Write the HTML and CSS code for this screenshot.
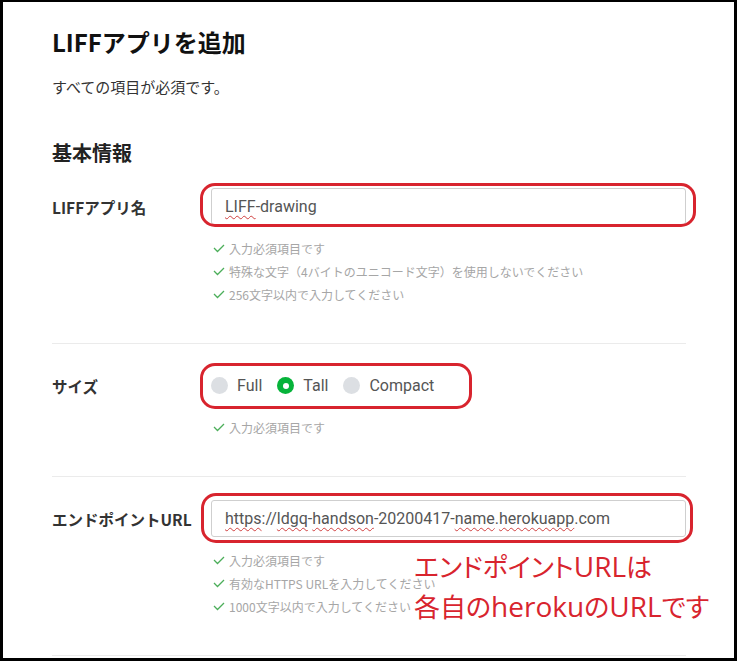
FILE: index.html
```html
<!DOCTYPE html>
<html lang="ja">
<head>
<meta charset="utf-8">
<title>LIFFアプリを追加</title>
<link rel="stylesheet" href="styles.css">
</head>
<body>
<div class="frame">
  <div class="content">
    <h1 class="title">LIFFアプリを追加</h1>
    <p class="lead">すべての項目が必須です。</p>
    <h2 class="heading">基本情報</h2>

    <div class="section">
      <div class="label">LIFFアプリ名</div>
      <div class="field">
        <div class="control">
          <div class="text-input"><span class="typo">LIFF</span>-drawing</div>
          <span class="mark mark-name"></span>
        </div>
        <ul class="hints">
          <li><svg class="check" viewBox="0 0 12 9"><polyline points="1,4 4.5,7.5 11,1"/></svg>入力必須項目です</li>
          <li><svg class="check" viewBox="0 0 12 9"><polyline points="1,4 4.5,7.5 11,1"/></svg>特殊な文字（4バイトのユニコード文字）を使用しないでください</li>
          <li><svg class="check" viewBox="0 0 12 9"><polyline points="1,4 4.5,7.5 11,1"/></svg>256文字以内で入力してください</li>
        </ul>
      </div>
    </div>

    <div class="section">
      <div class="label">サイズ</div>
      <div class="field">
        <div class="control radios">
          <span class="radio"><span class="dot"></span>Full</span>
          <span class="radio"><span class="dot on"></span>Tall</span>
          <span class="radio"><span class="dot"></span>Compact</span>
          <span class="mark mark-size"></span>
        </div>
        <ul class="hints">
          <li><svg class="check" viewBox="0 0 12 9"><polyline points="1,4 4.5,7.5 11,1"/></svg>入力必須項目です</li>
        </ul>
      </div>
    </div>

    <div class="section">
      <div class="label">エンドポイントURL</div>
      <div class="field">
        <div class="control">
          <div class="text-input"><span class="typo">https</span>://<span class="typo">ldgq</span>-<span class="typo">handson</span>-20200417-<span class="typo">name</span>.<span class="typo">herokuapp</span>.com</div>
          <span class="mark mark-url"></span>
        </div>
        <ul class="hints">
          <li><svg class="check" viewBox="0 0 12 9"><polyline points="1,4 4.5,7.5 11,1"/></svg>入力必須項目です</li>
          <li><svg class="check" viewBox="0 0 12 9"><polyline points="1,4 4.5,7.5 11,1"/></svg>有効なHTTPS URLを入力してください</li>
          <li><svg class="check" viewBox="0 0 12 9"><polyline points="1,4 4.5,7.5 11,1"/></svg>1000文字以内で入力してください</li>
        </ul>
        <p class="note">エンドポイント<span class="latin">URL</span>は<br>各自の<span class="latin">heroku</span>の<span class="latin">URL</span>です</p>
      </div>
    </div>
  </div>
</div>
</body>
</html>
```

FILE: styles.css
```css
* { box-sizing: border-box; }

html, body {
  margin: 0;
  padding: 0;
  background: #ffffff;
}

body {
  font-family: "Noto Sans CJK JP", "Noto Sans", sans-serif;
  color: #222;
}

.frame {
  position: relative;
  width: 737px;
  height: 661px;
  overflow: hidden;
  background: #ffffff;
  border-left: 3px solid #000;
  border-top: 2px solid #000;
  border-right: 3px solid #000;
  border-bottom: 3px solid #000;
}

.content {
  width: 683px;
  padding: 23px 0 0 49px;
}

.title {
  margin: 0;
  font-size: 24px;
  line-height: 34px;
  font-weight: 700;
  color: #111;
}

.lead {
  margin: 18px 0 0;
  font-size: 15px;
  line-height: 20px;
  color: #333;
}

.heading {
  margin: 44px 0 0;
  font-size: 20px;
  line-height: 24px;
  font-weight: 700;
  color: #222;
}

.section {
  display: grid;
  grid-template-columns: 159px 475px;
  padding: 23px 0 37px;
  border-bottom: 1px solid #ebebeb;
  width: 634px;
}

.label {
  height: 37px;
  display: flex;
  align-items: center;
  font-size: 15.5px;
  font-weight: 700;
  color: #333;
  white-space: nowrap;
}

.field {
  position: relative;
}

.control {
  position: relative;
  height: 37px;
}

.text-input {
  height: 37px;
  border: 1px solid #cfcfcf;
  border-radius: 3px;
  padding: 0 13px;
  display: flex;
  align-items: center;
  font-family: Roboto, "Liberation Sans", sans-serif;
  font-size: 16px;
  color: #555;
  white-space: nowrap;
}

.typo {
  text-decoration: underline wavy #d04040;
  text-decoration-thickness: 1px;
  text-underline-offset: 3px;
}

.radios {
  display: flex;
  align-items: center;
  gap: 15px;
}

.radio {
  display: inline-flex;
  align-items: center;
  gap: 9px;
  font-family: Roboto, "Liberation Sans", sans-serif;
  font-size: 16px;
  color: #555;
}

.dot {
  width: 17px;
  height: 17px;
  border-radius: 50%;
  background: #dcdfe3;
  display: inline-block;
  position: relative;
}

.dot.on {
  background: #06b33a;
}

.dot.on::after {
  content: "";
  position: absolute;
  left: 5.5px;
  top: 5.5px;
  width: 6px;
  height: 6px;
  border-radius: 50%;
  background: #fff;
}

.hints {
  list-style: none;
  margin: 12px 0 0;
  padding: 0;
  font-size: 12px;
  line-height: 23px;
  color: #a6a6a6;
  white-space: nowrap;
}

.hints li {
  display: flex;
  align-items: center;
}

.check {
  width: 12px;
  height: 9px;
  margin: 0 4px 0 2px;
  fill: none;
  stroke: #4cae5a;
  stroke-width: 1.3;
}

.mark {
  position: absolute;
  border: 3px solid #d8242e;
  border-radius: 15px;
  pointer-events: none;
}

.mark-name {
  left: -11px;
  right: -10px;
  top: -5px;
  bottom: -2px;
}

.mark-size {
  left: -11px;
  width: 272px;
  top: -4px;
  bottom: -5px;
}

.mark-url {
  left: -10px;
  right: -7px;
  top: -7px;
  bottom: -6px;
}

.note {
  position: absolute;
  left: 203px;
  top: 46px;
  margin: 0;
  font-size: 26px;
  line-height: 39px;
  color: #d8242e;
  white-space: nowrap;
  font-feature-settings: "palt";
}

.latin {
  font-family: "Open Sans", "Noto Sans", sans-serif;
  font-size: 28px;
  line-height: 39px;
}
```
